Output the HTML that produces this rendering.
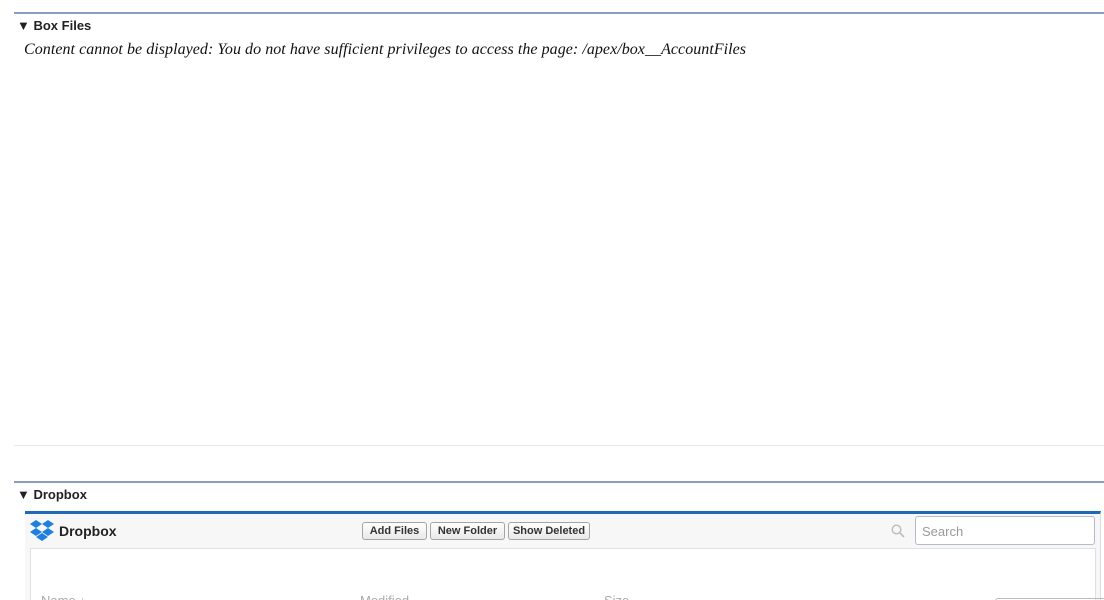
<!DOCTYPE html>
<html style="height:600px;overflow:hidden"><head><style>
body{margin:0;width:1104px;height:600px;overflow:hidden;background:#fff;font-family:"Liberation Sans",Arial,sans-serif;position:relative}
.a{position:absolute}
.hl{left:14px;right:0;height:2px;background:#8a9ebe}
.h{font-weight:bold;font-size:13px;color:#222;left:17px}
.btn{position:absolute;top:522px;height:16px;border:1px solid #a5a5a5;border-radius:3px;background:linear-gradient(#fff,#e8e8e8);font-size:11px;font-weight:bold;color:#333;line-height:16px;text-align:center}
</style></head><body>
<div class="a hl" style="top:12px"></div>
<div class="a h" style="top:18px">▼ Box Files</div>
<div class="a" style="left:24px;top:41px;font-family:'Liberation Serif',serif;font-style:italic;font-size:16px;color:#111;letter-spacing:0.05px">Content cannot be displayed: You do not have sufficient privileges to access the page: /apex/box__AccountFiles</div>
<div class="a" style="left:14px;right:0;top:445px;height:1px;background:#e8e8e8"></div>
<div class="a hl" style="top:481px"></div>
<div class="a h" style="top:487px">▼ Dropbox</div>
<div class="a" style="left:25px;width:1075px;top:511px;height:100px;border-top:3px solid #1f6ab5;background:#f7f7f7;border-right:1px solid #ddd"></div>
<div class="a" style="left:30px;width:1064px;top:548px;height:60px;border:1px solid #dde0e4;background:#fff"></div>
<svg class="a" style="left:29px;top:519px" width="26" height="24" viewBox="0 0 26 24"><g fill="#1f7fe0"><path d="M7 1l6 4-6 4-6-4z"/><path d="M19 1l6 4-6 4-6-4z"/><path d="M7 9l6 4-6 4-6-4z"/><path d="M19 9l6 4-6 4-6-4z"/><path d="M13 14l6 4-6 4-6-4z"/></g></svg>
<div class="a" style="left:59px;top:523px;font-weight:bold;font-size:14px;color:#222">Dropbox</div>
<div class="btn" style="left:362px;width:63px">Add Files</div>
<div class="btn" style="left:430px;width:73px">New Folder</div>
<div class="btn" style="left:508px;width:80px">Show Deleted</div>
<svg class="a" style="left:891px;top:524px" width="14" height="14" viewBox="0 0 14 14"><circle cx="5.5" cy="5.5" r="4.3" fill="none" stroke="#bbb" stroke-width="1.4"/><path d="M8.7 8.7L13 13" stroke="#bbb" stroke-width="1.6"/></svg>
<div class="a" style="left:915px;top:516px;width:180px;height:29px;border:1px solid #b5bcc7;border-radius:3px;background:#fff;box-sizing:border-box;font-size:13px;color:#999;padding:7px 0 0 6px">Search</div>
<div class="a" style="left:41px;top:593px;font-size:13px;color:#aaa">Name ↓</div>
<div class="a" style="left:360px;top:593px;font-size:13px;color:#aaa">Modified</div>
<div class="a" style="left:604px;top:593px;font-size:13px;color:#aaa">Size</div>
<div class="a" style="left:995px;top:598px;width:109px;height:6px;border:1px solid #bbb;border-radius:3px"></div>
</body></html>
